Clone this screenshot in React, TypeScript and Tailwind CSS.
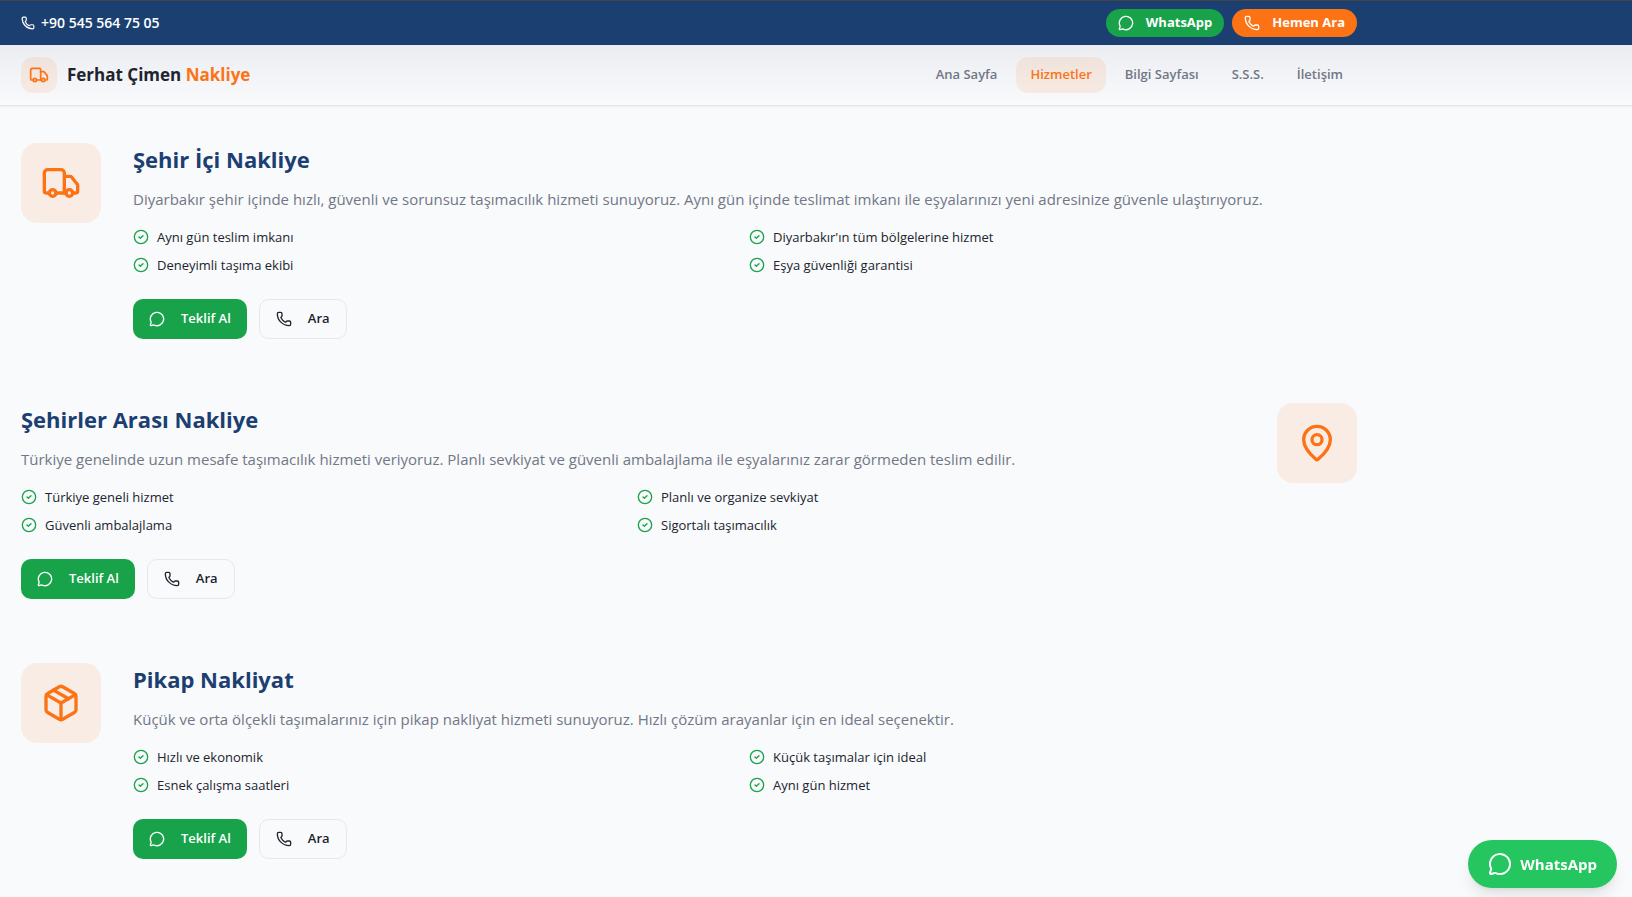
import { CircleCheck, MapPin, MessageCircle, Package, Phone, Truck } from "lucide-react";

const navLinks = [
  { label: "Ana Sayfa", href: "#anasayfa" },
  { label: "Hizmetler", href: "#hizmetler", active: true },
  { label: "Bilgi Sayfası", href: "#bilgi" },
  { label: "S.S.S.", href: "#sss" },
  { label: "İletişim", href: "#iletisim" },
];

const services = [
  {
    icon: Truck,
    title: "Şehir İçi Nakliye",
    description:
      "Diyarbakır şehir içinde hızlı, güvenli ve sorunsuz taşımacılık hizmeti sunuyoruz. Aynı gün içinde teslimat imkanı ile eşyalarınızı yeni adresinize güvenle ulaştırıyoruz.",
    features: [
      "Aynı gün teslim imkanı",
      "Diyarbakır'ın tüm bölgelerine hizmet",
      "Deneyimli taşıma ekibi",
      "Eşya güvenliği garantisi",
    ],
  },
  {
    icon: MapPin,
    title: "Şehirler Arası Nakliye",
    description:
      "Türkiye genelinde uzun mesafe taşımacılık hizmeti veriyoruz. Planlı sevkiyat ve güvenli ambalajlama ile eşyalarınız zarar görmeden teslim edilir.",
    features: [
      "Türkiye geneli hizmet",
      "Planlı ve organize sevkiyat",
      "Güvenli ambalajlama",
      "Sigortalı taşımacılık",
    ],
  },
  {
    icon: Package,
    title: "Pikap Nakliyat",
    description:
      "Küçük ve orta ölçekli taşımalarınız için pikap nakliyat hizmeti sunuyoruz. Hızlı çözüm arayanlar için en ideal seçenektir.",
    features: [
      "Hızlı ve ekonomik",
      "Küçük taşımalar için ideal",
      "Esnek çalışma saatleri",
      "Aynı gün hizmet",
    ],
  },
];

const TopBar = () => {
  return (
    <div className="bg-[#1c3f72] border-t border-[#444444] text-white">
      <div className="max-w-[1378px] px-[21px] h-11 flex items-center justify-between">
        <a href="tel:+905455647505" className="flex items-center gap-[6px] text-sm font-semibold">
          <Phone size={14} />
          +90 545 564 75 05
        </a>
        <div className="flex gap-2 text-[13px] font-bold">
          <button className="h-7 px-3 flex items-center gap-3 rounded-full bg-[#18a34a]">
            <MessageCircle size={16} />
            WhatsApp
          </button>
          <button className="h-7 px-3 flex items-center gap-3 rounded-full bg-[#fc7316]">
            <Phone size={16} />
            Hemen Ara
          </button>
        </div>
      </div>
    </div>
  );
};

const Header = () => {
  return (
    <header className="bg-linear-to-b from-[#ebedf1] to-[#f9fafc] border-b border-[#e3e5e9] shadow-xs">
      <div className="max-w-[1378px] px-[21px] h-15 flex items-center justify-between">
        <a href="#anasayfa" className="flex items-center gap-[10px] text-[17px] font-bold text-[#20242e]">
          <span className="size-9 rounded-xl bg-[#fc7316]/10 text-[#fc7316] flex items-center justify-center">
            <Truck size={20} />
          </span>
          <span>
            Ferhat Çimen <span className="text-[#fc7316]">Nakliye</span>
          </span>
        </a>
        <nav className="flex gap-[5px] text-[13px] font-semibold text-[#717786]">
          {navLinks.map((link) => (
            <a
              key={link.href}
              href={link.href}
              className={
                link.active
                  ? "h-9 px-[14px] flex items-center rounded-xl bg-[#fc7316]/10 text-[#fc7316]"
                  : "h-9 px-[14px] flex items-center rounded-xl"
              }
            >
              {link.label}
            </a>
          ))}
        </nav>
      </div>
    </header>
  );
};

const Services = () => {
  return (
    <main className="max-w-[1378px] px-[21px] pt-[37px] pb-9 flex flex-col gap-16" id="hizmetler">
      {services.map((service, index) => (
        <section
          key={service.title}
          className={index % 2 === 1 ? "flex flex-row-reverse gap-8" : "flex gap-8"}
        >
          <div className="size-20 shrink-0 rounded-2xl bg-[#fc7316]/10 text-[#fc7316] flex items-center justify-center">
            <service.icon size={40} />
          </div>
          <div className="flex-1">
            <h2 className="text-[22px] leading-8 font-bold text-[#1c3f72]">{service.title}</h2>
            <p className="mt-3 mb-4 text-[15px] leading-6 text-[#717786]">{service.description}</p>
            <ul className="grid grid-cols-2 gap-2 text-[13px] leading-5 text-[#20242e]">
              {service.features.map((feature) => (
                <li key={feature} className="flex items-center gap-2">
                  <CircleCheck size={16} className="text-[#18a34a]" />
                  {feature}
                </li>
              ))}
            </ul>
            <div className="mt-6 flex gap-3 text-[13px] font-semibold">
              <button className="h-10 px-4 flex items-center gap-4 rounded-[10px] bg-[#18a34a] text-white">
                <MessageCircle size={16} />
                Teklif Al
              </button>
              <button className="h-10 px-4 flex items-center gap-4 rounded-[10px] border border-[#e5e7eb] text-[#20242e]">
                <Phone size={16} />
                Ara
              </button>
            </div>
          </div>
        </section>
      ))}
    </main>
  );
};

const App = () => {
  return (
    <div className="min-h-screen bg-[#f9fafc] font-['Open_Sans','Noto_Sans',sans-serif]">
      <TopBar />
      <Header />
      <Services />
      <button className="fixed right-[15px] bottom-[9px] h-12 px-5 flex items-center gap-2 rounded-full bg-[#25c660] text-white text-[15px] font-bold shadow-lg">
        <MessageCircle size={24} />
        WhatsApp
      </button>
    </div>
  );
};

export default App;
